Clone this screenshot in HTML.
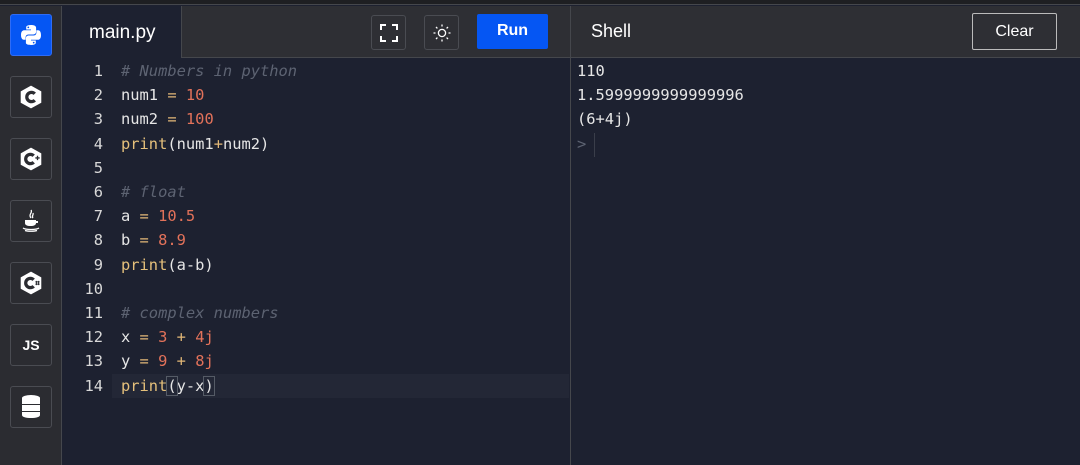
<!DOCTYPE html>
<html><head><meta charset="utf-8"><style>
*{margin:0;padding:0;box-sizing:border-box}
body{width:1080px;height:465px;background:#1d2130;font-family:"Liberation Sans",sans-serif;position:relative;overflow:hidden}
.top{position:absolute;left:0;top:0;width:1080px;height:5px;background:#1e1f22;border-bottom:1px solid #45474c}
.side{position:absolute;left:0;top:6px;width:62px;height:459px;background:#2b2c31;border-right:1px solid #45474c}
.ic{position:absolute;left:10px;width:42px;height:42px;border:1px solid #4a4c52;border-radius:3px;display:flex;align-items:center;justify-content:center;color:#fff;font-weight:bold}
.hdr{position:absolute;left:62px;top:6px;width:1018px;height:52px;background:#2e2f34;border-bottom:1px solid #45474c}
.tab{position:absolute;left:62px;top:6px;width:120px;height:52px;background:#1d2130;color:#fff;font-size:19px;padding:16px 0 0 27px;border-right:1px solid #45474c}
.btn{position:absolute;top:15px;width:35px;height:35px;border:1px solid #4a4c52;border-radius:3px;display:flex;align-items:center;justify-content:center}
.run{position:absolute;left:477px;top:14px;width:71px;height:35px;background:#0556f3;border-radius:2px;color:#fff;font-weight:bold;font-size:16px;text-align:center;line-height:34px}
.div{position:absolute;left:570px;top:6px;width:1px;height:459px;background:#45474c}
.shell{position:absolute;left:591px;top:21px;color:#fff;font-size:18px}
.clear{position:absolute;left:972px;top:13px;width:85px;height:37px;border:1px solid #bbb;border-radius:2px;color:#fff;font-size:16px;text-align:center;line-height:35px}
.code{position:absolute;top:59px;font-family:"DejaVu Sans Mono","Liberation Mono",monospace;font-size:15.4px;line-height:24.2px;white-space:pre}
.ln{left:70px;width:33px;text-align:right;color:#d8d8d8}
.src{left:121px;color:#e6e6e6}
.c{color:#5d6372;font-style:italic}.o{color:#e3b877}.n{color:#e3725a}.f{color:#e5c07b}
.hl{position:absolute;left:112px;top:374px;width:457px;height:24px;background:#232736}
.out{left:577px;color:#e6e6e6}
</style></head><body>
<div class="top"></div>
<div class="side">
<div class="ic" style="top:8px;background:#0556f3;border-color:#2f6cf5"><svg width="24" height="24" viewBox="0 0 24 24"><path d="M11.9 2c-5 0-4.7 2.2-4.7 2.2v2.3h4.8v.7H5.3S2 6.800 2 11.9s2.9 4.9 2.9 4.9h1.7v-2.4s-.1-2.9 2.9-2.9h4.8s2.8 0 2.8-2.7V4.8S17.5 2 11.9 2zM9.3 3.5a.9.9 0 110 1.8.9.9 0 010-1.8z" fill="#fff"/><path d="M12.1 22c5 0 4.7-2.2 4.7-2.2v-2.3H12v-.7h6.7s3.3.4 3.3-4.7-2.9-4.9-2.9-4.9h-1.7v2.4s.1 2.9-2.9 2.9H9.7s-2.8 0-2.8 2.7v4.6S6.5 22 12.1 22zm2.6-1.5a.9.9 0 110-1.8.9.9 0 010 1.8z" fill="#fff"/></svg></div>
<div class="ic" style="top:70px"><svg width="26" height="26" viewBox="0 0 24 24"><path d="M12 1.5l9.5 5.25v10.5L12 22.5l-9.5-5.25V6.75z" fill="#fff"/><path d="M15.5 9a4.3 4.3 0 100 6" stroke="#2b2c31" stroke-width="3" fill="none"/></svg></div>
<div class="ic" style="top:132px"><svg width="26" height="26" viewBox="0 0 24 24"><path d="M12 1.5l9.5 5.25v10.5L12 22.5l-9.5-5.25V6.75z" fill="#fff"/><path d="M14.5 9a4.3 4.3 0 100 6" stroke="#2b2c31" stroke-width="3" fill="none"/><path d="M16 11h4M18 9v4" stroke="#2b2c31" stroke-width="1.2"/></svg></div>
<div class="ic" style="top:194px"><svg width="24" height="26" viewBox="0 0 24 26"><path d="M12 2c2 3-3 4 0 8M14 5c1 2-2 3 0 5" stroke="#fff" stroke-width="1.3" fill="none"/><path d="M6 12h11v3c0 2-2 3-5.5 3S6 17 6 15z M17 13h2v2h-2" fill="#fff"/><path d="M4 20c3 2 13 2 16 0M6 22.5c3 1 9 1 12 0" stroke="#fff" stroke-width="1.2" fill="none"/></svg></div>
<div class="ic" style="top:256px"><svg width="26" height="26" viewBox="0 0 24 24"><path d="M12 1.5l9.5 5.25v10.5L12 22.5l-9.5-5.25V6.75z" fill="#fff"/><path d="M14.5 9a4.3 4.3 0 100 6" stroke="#2b2c31" stroke-width="3" fill="none"/><path d="M16 11h4M16 13h4M17 10v4M19 10v4" stroke="#2b2c31" stroke-width="0.9"/></svg></div>
<div class="ic" style="top:318px;font-size:14px">JS</div>
<div class="ic" style="top:380px"><svg width="22" height="26" viewBox="0 0 22 26"><ellipse cx="11" cy="4" rx="9" ry="3" fill="#fff"/><rect x="2" y="4" width="18" height="6" fill="#fff"/><rect x="2" y="11" width="18" height="6" fill="#fff"/><path d="M2 18h18v3c0 2-4 3-9 3s-9-1-9-3z" fill="#fff"/></svg></div>
</div>
<div class="hdr"></div>
<div class="tab">main.py</div>
<div class="btn" style="left:371px"><svg width="18" height="18" viewBox="0 0 18 18" fill="none" stroke="#fff" stroke-width="2"><path d="M1 6V1h5M12 1h5v5M17 12v5h-5M6 17H1v-5"/></svg></div>
<div class="btn" style="left:424px"><svg width="20" height="20" viewBox="0 0 20 20" fill="none" stroke="#fff" stroke-width="1.3"><circle cx="10" cy="10" r="3.6"/><path d="M10 1.5v2M10 16.5v2M1.5 10h2M16.5 10h2M4 4l1.4 1.4M14.6 14.6L16 16M4 16l1.4-1.4M14.6 5.4L16 4"/></svg></div>
<div class="run">Run</div>
<div class="div"></div>
<div class="shell">Shell</div>
<div class="clear">Clear</div>
<div class="hl"></div>
<div class="code ln">1
2
3
4
5
6
7
8
9
10
11
12
13
14</div>
<div class="code src"><span class="c"># Numbers in python</span>
num1 <span class="o">=</span> <span class="n">10</span>
num2 <span class="o">=</span> <span class="n">100</span>
<span class="f">print</span>(num1<span class="o">+</span>num2)

<span class="c"># float</span>
a <span class="o">=</span> <span class="n">10.5</span>
b <span class="o">=</span> <span class="n">8.9</span>
<span class="f">print</span>(a-b)

<span class="c"># complex numbers</span>
x <span class="o">=</span> <span class="n">3</span> <span class="o">+</span> <span class="n">4j</span>
y <span class="o">=</span> <span class="n">9</span> <span class="o">+</span> <span class="n">8j</span>
<span class="f">print</span><span style="outline:1px solid #555b66">(</span>y-x<span style="outline:1px solid #555b66">)</span></div>
<div class="code out">110
1.5999999999999996
(6+4j)
<span style="color:#5d6372">&gt;</span></div>
<div style="position:absolute;left:594px;top:133px;width:1px;height:24px;background:#3a3e4a"></div>
</body></html>
